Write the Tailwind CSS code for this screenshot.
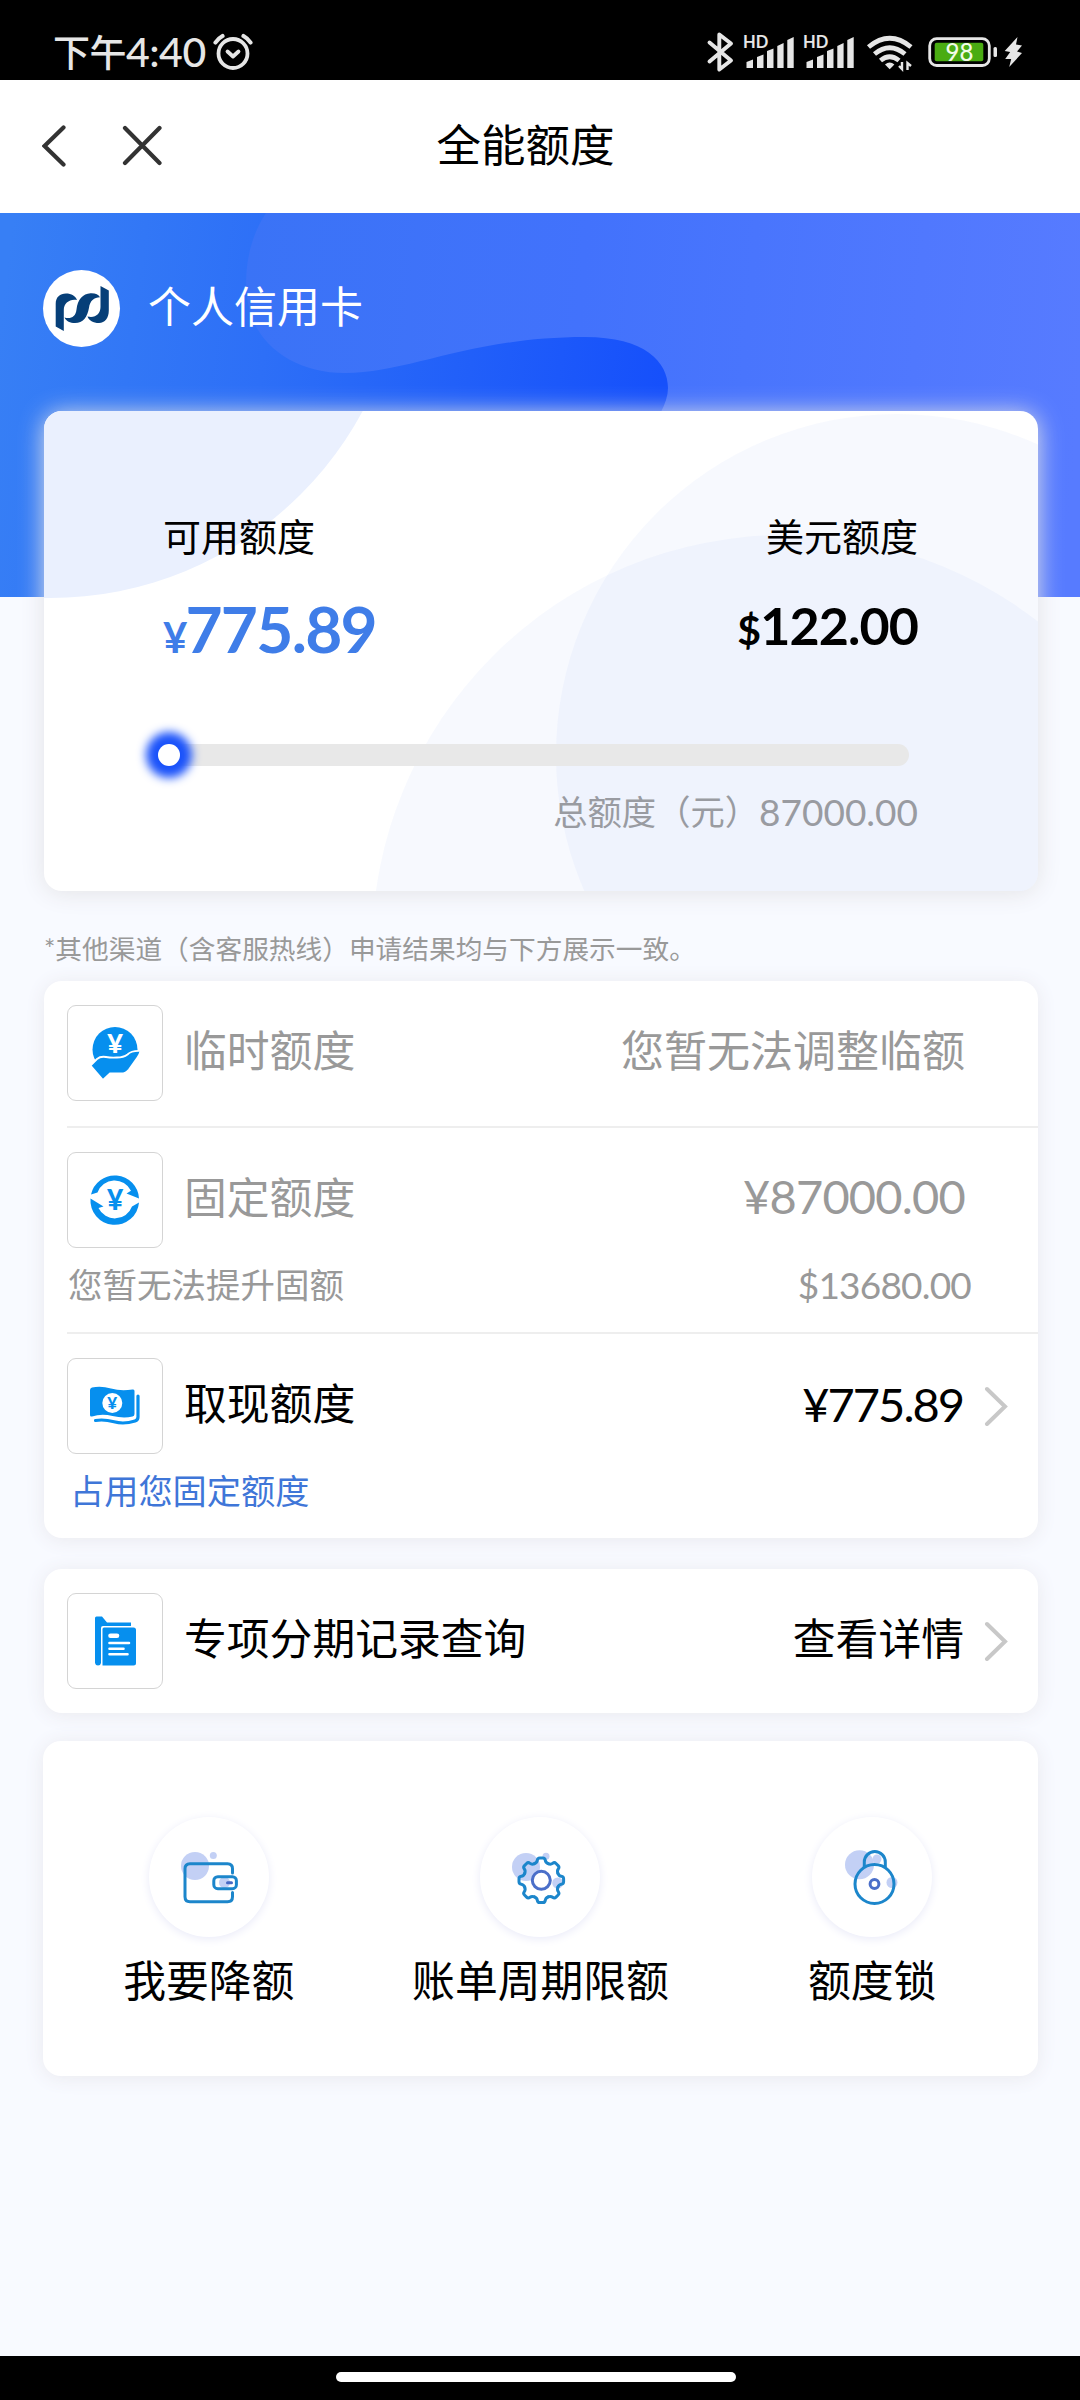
<!DOCTYPE html>
<html lang="zh-CN">
<head>
  <meta charset="UTF-8">
  <meta name="viewport" content="width=device-width, initial-scale=1.0">
  <title>全能额度</title>
  <script src="https://cdn.jsdelivr.net/npm/@tailwindcss/browser@4"></script>
</head>
<body class="bg-[#f8faff] text-black font-['Lato','Noto_Sans_CJK_SC',sans-serif] w-[1080px] h-[2400px] flex flex-col overflow-hidden whitespace-nowrap">

  <!-- Status bar -->
  <div class="h-20 shrink-0 bg-black text-[#e6e6e6] flex items-start justify-between pl-[53px] pr-[50px] pt-[30px]">
    <div class="flex items-center gap-[7px] h-11">
      <span class="text-[41px] leading-[44px] font-medium tracking-[-0.5px]"><span class="text-[37px]">下午</span>4:40</span>
      <svg class="w-10 h-10" viewBox="0 0 40 40" fill="none" stroke="#e6e6e6" stroke-width="3.8" stroke-linecap="round" stroke-linejoin="round">
        <circle cx="20" cy="21.5" r="14.5"/>
        <path d="M14.5 19.5l5.5 5 5.500-5"/>
        <path d="M2.500 10.500Q5 6.500 9.500 4M37.500 10.500Q35 6.500 30.500 4" stroke-width="4.200"/>
      </svg>
    </div>
    <svg class="w-[330px] h-11" viewBox="700 30 330 44" fill="#e6e6e6">
      <path d="M709.500 42.500L731 60.500 719.300 69.500V34.500L731 43.500 709.500 61.500" fill="none" stroke="#e6e6e6" stroke-width="3.900" stroke-linejoin="round" stroke-linecap="round"/>
      <g id="signal">
        <text x="743" y="48.300" font-size="16.500" font-weight="700">HD</text>
        <path d="M746.500 62l6.500-2.500V68h-6.500zM757 57l6.500-2.500V68H757zM767 51l6.500-2.500V68H767zM777.300 46l6.300-3V68h-6.300zM787.300 40l6.400-3V68h-6.400z"/>
      </g>
      <use href="#signal" x="60"/>
      <g fill="none" stroke="#e6e6e6" stroke-width="4.800">
        <path d="M868.500 47Q889.700 29.500 911 47"/>
        <path d="M874.500 54Q889.700 41.500 905 54"/>
        <path d="M880.500 60.500Q889.700 53 899 60.500"/>
      </g>
      <path d="M885 64.500q4.700-4 9.400 0l-4.700 4.700z"/>
      <path d="M902 62v7l-3-3M907.500 70v-7l3.500 3" fill="none" stroke="#e6e6e6" stroke-width="2.400"/>
      <rect x="929.700" y="38.700" width="59.600" height="26.800" rx="7" fill="none" stroke="#e6e6e6" stroke-width="2.800"/>
      <rect x="934.700" y="42.700" width="48.600" height="18.600" rx="2" fill="#4aac12"/>
      <rect x="993.500" y="47" width="3.500" height="10" rx="1.500"/>
      <text x="959.500" y="60.500" font-size="24" font-weight="500" text-anchor="middle" fill="#f2fbe8">98</text>
      <path d="M1017.500 37l-12.800 14 5.500 1-5 7 6 0-2 8 12.800-14-5-1.500 5-6-6-1z"/>
    </svg>
  </div>

  <!-- Title bar -->
  <div class="h-[133px] shrink-0 bg-white relative flex items-center justify-center pb-1">
    <div class="absolute left-[42px] top-[44px] flex gap-[56px]">
      <svg class="w-6 h-11" viewBox="0 0 24 44" fill="none" stroke="#333" stroke-width="4.200" stroke-linecap="round"><path d="M21.500 3.500L2.500 22l19 18.500"/></svg>
      <svg class="w-10 h-11" viewBox="0 0 40 44" fill="none" stroke="#333" stroke-width="4.200" stroke-linecap="round"><path d="M3 4l34.500 35M37.500 4L3 39"/></svg>
    </div>
    <h1 class="text-[44.5px] leading-[50px] mr-[29px]">全能额度</h1>
  </div>

  <!-- Blue banner -->
  <div class="h-[384px] shrink-0 relative">
    <svg class="absolute inset-0 w-full h-full" viewBox="0 213 1080 384">
      <defs>
        <linearGradient id="base" gradientUnits="userSpaceOnUse" x1="0" y1="320" x2="660" y2="400">
          <stop offset="0" stop-color="#377ff5"/>
          <stop offset=".4" stop-color="#2d6ff7"/>
          <stop offset="1" stop-color="#1650fb"/>
        </linearGradient>
        <linearGradient id="wave" gradientUnits="userSpaceOnUse" x1="240" y1="330" x2="1080" y2="400">
          <stop offset="0" stop-color="#3a73f6"/>
          <stop offset=".4" stop-color="#4272fc"/>
          <stop offset="1" stop-color="#577bff"/>
        </linearGradient>
      </defs>
      <path fill="url(#base)" d="M0 213h1080v384H0z"/>
      <path fill="url(#wave)" d="M266 213C248 240 243 275 248 303C255 345 295 373 345 373C410 373 470 337 585 337C645 337 668 362 668 388C668 396 665 404 661 412L600 597H1080V213Z"/>
    </svg>
    <div class="relative flex items-center gap-[28px] pl-[43px] pt-[57px]">
      <div class="w-[77px] h-[77px] rounded-full bg-white">
        <svg viewBox="0 0 77 77" fill="#063f78">
          <path d="M12.700 34C12.700 27 17 23.500 23 23.500c5.500 0 9.500 2.500 11 6.500C27 28.500 20.800 33 20.800 40v21l-8.100-4.500z"/>
          <path d="M21.500 47.500c6 1.500 11 0 12-8 1-10 6.500-16 14-16.300 5-.2 8 1.300 9.500 4-6 0-10 3.500-11 10.500C44.500 47 40 53 32 53c-5 0-8.500-1.500-10.500-5.500z"/>
          <path d="M57.500 16l8.300 4.500v20C65.800 48 62 53 56 53s-10-2.500-11.500-6.500C52 48.500 57.500 44 57.500 37z"/>
        </svg>
      </div>
      <span class="text-[43px] leading-[48px] text-white pb-[3px]">个人信用卡</span>
    </div>
  </div>

  <!-- Available quota -->
  <div class="relative -mt-[186px] ml-[44px] w-[994px] h-[480px] shrink-0 rounded-[18px] bg-white shadow-[0_2px_24px_#e3e3e6] overflow-hidden">
    <svg class="absolute inset-0 w-full h-full" viewBox="44 411 994 480">
      <circle cx="50" cy="243" r="355" fill="#eaf0fe"/>
      <circle cx="897" cy="755" r="341" fill="#3a6ef0" fill-opacity=".045"/>
      <circle cx="785" cy="948" r="413" fill="#3a6ef0" fill-opacity=".04"/>
    </svg>
    <div class="relative pt-[105px]">
      <div class="flex justify-between pl-[119px] pr-[120px]">
        <div>
          <div class="text-[38px] leading-10">可用额度</div>
          <div class="mt-[41px] text-[64px] leading-[64px] font-bold tracking-[-1.7px] text-[#3f7de8]"><span class="text-[42px] tracking-[-2px]">¥</span>775.89</div>
        </div>
        <div class="text-right">
          <div class="text-[38px] leading-10">美元额度</div>
          <div class="mt-[43px] text-[52px] leading-[52px] font-bold tracking-[-0.9px]"><span class="text-[41px]">$</span>122.00</div>
        </div>
      </div>
      <div class="mt-[75px] ml-[114px] mr-[129px] h-[22px] rounded-full bg-[#e8e8e8]">
        <div class="w-[22px] h-[22px] rounded-full bg-white shadow-[0_0_10px_12px_#1a52fa]"></div>
      </div>
      <div class="mt-[26px] pr-[120px] flex justify-end text-[34.3px] leading-10 text-[#999ba1]">总额度（元）<span class="text-[37px]">87000.00</span></div>
    </div>
  </div>

  <p class="mt-[43px] ml-[44px] text-[26.7px] leading-[30px] text-[#999]">*其他渠道（含客服热线）申请结果均与下方展示一致。</p>

  <!-- Quota list -->
  <div class="mt-[17px] ml-[44px] w-[994px] shrink-0 rounded-[18px] bg-white shadow-[0_2px_20px_#e9e9ee] pl-[23px] text-[42.8px] leading-[48px]">
    <div class="pt-6 pb-[25px] border-b-2 border-[#eee] text-[#999]">
      <div class="flex items-center pr-[73px]">
        <div class="w-24 h-24 rounded-[9px] border border-[#d4d4d4]">
          <svg class="-m-px w-24 h-24" viewBox="0 0 96 96" fill="#068fee">
            <circle cx="48" cy="44.500" r="22.500"/>
            <path d="M23.500 60.500l6.500-6.500q3.500-3 9-2t11 .5q6.500 0 10.500-3 4-4 13-3.500-.5 3-3 6.500L62 64.500q-3 4-8 4H43l-7 6.500z" stroke="#fff" stroke-width="1.800"/>
            <text x="48" y="48" font-size="27" font-weight="900" text-anchor="middle" fill="#fff">¥</text>
          </svg>
        </div>
        <span class="ml-[21px] pb-1">临时额度</span>
        <span class="ml-auto pb-1 text-[43px]">您暂无法调整临额</span>
      </div>
    </div>

    <div class="pt-6 pb-[27px] border-b-2 border-[#eee] text-[#999]">
      <div class="flex items-center pr-[73px]">
        <div class="w-24 h-24 rounded-[9px] border border-[#d4d4d4]">
          <svg class="-m-px w-24 h-24" viewBox="0 0 96 96" fill="#068fee">
            <path d="M24 42.500A24.300 24.300 0 0 1 72 46.500L59.500 41.500 64 38.800A18.200 18.200 0 0 0 30.500 40.500Z"/>
            <path d="M72 50.500A24.300 24.300 0 0 1 23.500 46.500L36.500 54.500 31.500 56A18.200 18.200 0 0 0 65 54.500Z"/>
            <text x="48" y="57.500" font-size="28" font-weight="900" text-anchor="middle">¥</text>
          </svg>
        </div>
        <span class="ml-[21px] pb-[5px]">固定额度</span>
        <span class="ml-auto pb-[8px] text-[47px] tracking-[-0.8px]">¥87000.00</span>
      </div>
      <div class="mt-[17px] pr-[67px] pl-px flex justify-between text-[34.5px] leading-10">
        <span>您暂无法提升固额</span>
        <span class="text-[37px] tracking-[-0.8px]">$13680.00</span>
      </div>
    </div>

    <div class="pt-6 pb-[27px]">
      <div class="flex items-center pr-[30px]">
        <div class="w-24 h-24 rounded-[9px] border border-[#d4d4d4]">
          <svg class="-m-px w-24 h-24" viewBox="0 0 96 96" fill="#068fee">
            <path d="M23 32q0-2 2-2.500 9-2 19 1t21.500 1q2-.5 2 1.500v23q0 2-2 2.500-9 2-20-.5t-20.500.5q-2 .5-2-1.500z"/>
            <path d="M71 38v21q0 3-3 4-11 3.500-21 .8T28.500 62.500" fill="none" stroke="#068fee" stroke-width="3.200" stroke-linecap="round"/>
            <circle cx="45.300" cy="45" r="10" fill="#fff"/>
            <text x="45.300" y="51" font-size="17" font-weight="900" text-anchor="middle">¥</text>
          </svg>
        </div>
        <span class="ml-[21px] pb-1">取现额度</span>
        <span class="ml-auto pb-[5px] text-[47px] tracking-[-2px]">¥775.89</span>
        <svg class="ml-[21px] w-6 h-10" viewBox="0 0 24 40" fill="none" stroke="#c8c8c8" stroke-width="4" stroke-linecap="round"><path d="M3 3l18 17.500L3 38"/></svg>
      </div>
      <div class="mt-[17px] pl-[3px] text-[34.2px] leading-10 text-[#3f76d8]">占用您固定额度</div>
    </div>
  </div>

  <!-- Instalment records -->
  <div class="mt-[31px] ml-[44px] w-[994px] h-[144px] shrink-0 rounded-[18px] bg-white shadow-[0_2px_20px_#e9e9ee] pl-[23px] pr-[30px] flex items-center text-[42.8px] leading-[48px]">
    <div class="w-24 h-24 rounded-[9px] border border-[#d4d4d4]">
      <svg class="-m-px w-24 h-24" viewBox="0 0 96 96" fill="#068fee">
        <path d="M28 25q0-1.500 1.500-1.500H35l5 6H64v3.500H36q-2 0-2 2V70q-.5 2.500-3 2.500T28 70z"/>
        <path d="M35.500 36q0-1.500 1.500-1.500h29.500q2.500 0 2.500 2.500v33q0 2.500-2.500 2.500h-31z"/>
        <g stroke="#fff" stroke-width="2.600" stroke-linecap="round">
          <path d="M43.500 42.800h6.500" stroke-width="4.600"/>
          <path d="M42.500 50H62M42.500 55.700H56.500M42.500 61.200H60.500"/>
        </g>
      </svg>
    </div>
    <span class="ml-[21px] pb-[5px]">专项分期记录查询</span>
    <span class="ml-auto pb-[5px]">查看详情</span>
    <svg class="ml-[20px] w-6 h-10" viewBox="0 0 24 40" fill="none" stroke="#c8c8c8" stroke-width="4" stroke-linecap="round"><path d="M3 3l18 17.500L3 38"/></svg>
  </div>

  <!-- Shortcuts -->
  <div class="mt-[28px] ml-[43px] mr-[42px] h-[335px] shrink-0 rounded-[18px] bg-white shadow-[0_2px_20px_#e9e9ee] pt-[76px] grid grid-cols-3 text-[42.8px] leading-[44px]">
    <div class="flex flex-col items-center">
      <div class="w-[120px] h-[120px] rounded-full bg-white shadow-[0_2px_10px_#e9eaf8]">
        <svg viewBox="0 0 120 120" fill="none" stroke="#1c86cb" stroke-width="3" stroke-linecap="round">
          <g fill="#c3d0f5" stroke="none"><circle cx="46" cy="49" r="14"/><circle cx="64.300" cy="38.500" r="3.500"/><circle cx="75.500" cy="65.500" r="5.500"/></g>
          <path d="M83.500 56V51.700q0-5-5-5H41q-5 0-5 5v28q0 5 5 5h37.500q5 0 5-5V75.500"/>
          <rect x="64.800" y="59.700" width="22.600" height="12" rx="4"/>
          <path d="M78.500 65.700h4" stroke="#4668c4"/>
        </svg>
      </div>
      <span class="mt-[22px]">我要降额</span>
    </div>
    <div class="flex flex-col items-center">
      <div class="w-[120px] h-[120px] rounded-full bg-white shadow-[0_2px_10px_#e9eaf8]">
        <svg viewBox="0 0 120 120" fill="none" stroke="#1c86cb" stroke-width="3">
          <g fill="#c3d0f5" stroke="none"><circle cx="46" cy="50" r="14"/><circle cx="66" cy="39.300" r="3.500"/><circle cx="77.700" cy="66" r="5.500"/></g>
          <g transform="translate(61.300 63.300)">
            <path id="tooth" d="M-6.900-16.600C-5-17.400-4.200-18.300-4-20Q-3.700-22.300-1.500-22.300H1.500Q3.700-22.300 4-20C4.200-18.300 5-17.400 6.900-16.600" stroke-linecap="round"/>
            <use href="#tooth" transform="rotate(45)"/>
            <use href="#tooth" transform="rotate(90)"/>
            <use href="#tooth" transform="rotate(135)"/>
            <use href="#tooth" transform="rotate(180)"/>
            <use href="#tooth" transform="rotate(225)"/>
            <use href="#tooth" transform="rotate(270)"/>
            <use href="#tooth" transform="rotate(315)"/>
            <circle r="9" stroke="#4b6fc9" fill="#fff"/>
          </g>
        </svg>
      </div>
      <span class="mt-[22px]">账单周期限额</span>
    </div>
    <div class="flex flex-col items-center">
      <div class="w-[120px] h-[120px] rounded-full bg-white shadow-[0_2px_10px_#e9eaf8]">
        <svg viewBox="0 0 120 120" fill="none" stroke="#1c86cb" stroke-width="3">
          <g fill="#c3d0f5" stroke="none"><circle cx="47.500" cy="47.700" r="14.500"/><circle cx="65" cy="42" r="4.500"/><circle cx="80" cy="65.500" r="5.500"/></g>
          <path d="M52.300 50V45a10.500 10.500 0 0 1 21 0V50"/>
          <circle cx="62.500" cy="67" r="19.500"/>
          <circle cx="62.500" cy="67" r="4.400" stroke="#4b6fc9" fill="#fff"/>
        </svg>
      </div>
      <span class="mt-[22px]">额度锁</span>
    </div>
  </div>

  <!-- Gesture bar -->
  <div class="mt-auto h-11 shrink-0 bg-black flex justify-center pt-4">
    <div class="w-[400px] h-[10px] rounded-full bg-white mr-[8px]"></div>
  </div>

</body>
</html>
